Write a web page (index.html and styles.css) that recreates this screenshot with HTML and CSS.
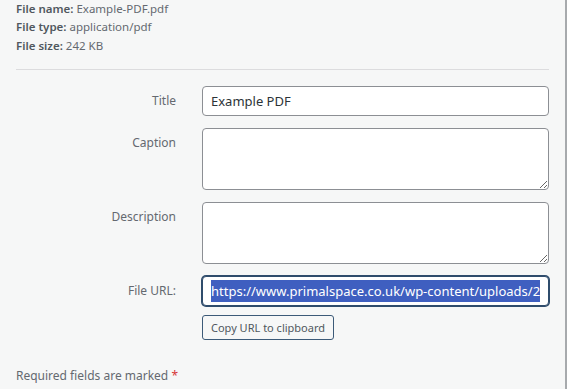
FILE: index.html
```html
<!DOCTYPE html>
<html lang="en">
<head>
    <meta charset="UTF-8">
    <meta name="viewport" content="width=device-width, initial-scale=1.0">
    <title>Attachment Details</title>
    <link rel="stylesheet" href="styles.css">
</head>
<body>
    <div class="panel">
        <div class="file-info">
            <div><strong>File name:</strong> Example-PDF.pdf</div>
            <div><strong>File type:</strong> application/pdf</div>
            <div><strong>File size:</strong> 242 KB</div>
        </div>

        <div class="settings">
            <label class="setting-label" for="title">Title</label>
            <input class="field" type="text" id="title" value="Example PDF">

            <label class="setting-label" for="caption">Caption</label>
            <textarea class="field area" id="caption"></textarea>

            <label class="setting-label" for="description">Description</label>
            <textarea class="field area" id="description"></textarea>

            <label class="setting-label">File URL:</label>
            <div class="url-cell">
                <div class="field url-field"><span class="selected">https://www.primalspace.co.uk/wp-content/uploads/2</span></div>
                <button class="copy-btn" type="button">Copy URL to clipboard</button>
            </div>
        </div>

        <p class="required">Required fields are marked <span class="star">*</span></p>
    </div>
</body>
</html>
```

FILE: styles.css
```css
/* Global Styles */
* {
    margin: 0;
    padding: 0;
    box-sizing: border-box;
}

body {
    font-family: 'Noto Sans', 'Open Sans', sans-serif;
    background-color: #f6f7f7;
    color: #646970;
}

.panel {
    width: 567px;
    height: 389px;
    border-right: 2px solid #a7aaad;
    padding: 0 16px;
    overflow: hidden;
}

/* File info */
.file-info {
    font-size: 11.5px;
    line-height: 18.3px;
    padding-bottom: 14px;
    border-bottom: 1px solid #dcdcde;
}

.file-info strong {
    font-weight: 600;
    color: #50575e;
}

/* Settings grid */
.settings {
    display: grid;
    grid-template-columns: 160px minmax(0, 1fr);
    column-gap: 26px;
    row-gap: 12px;
    margin-top: 16px;
}

.setting-label {
    text-align: right;
    font-size: 12px;
    line-height: 18px;
    padding-top: 6px;
    color: #646970;
}

.field {
    width: 100%;
    min-width: 0;
    height: 30px;
    border: 1px solid #8c8f94;
    border-radius: 4px;
    background-color: #fff;
    padding: 0 8px;
    font-family: inherit;
    font-size: 13px;
    color: #2c3338;
}

.area {
    height: 62px;
    resize: vertical;
}

.url-cell {
    display: flex;
    flex-direction: column;
    align-items: flex-start;
    gap: 9px;
    min-width: 0;
}

.url-field {
    display: flex;
    align-items: center;
    overflow: hidden;
    white-space: nowrap;
    border-color: #2f4c6c;
    box-shadow: 0 0 0 1px #2f4c6c;
    padding-right: 8px;
}

.selected {
    background-color: #3f5fc0;
    color: #fff;
    line-height: 22px;
    font-size: 13px;
}

.copy-btn {
    height: 25px;
    padding: 0 8px;
    border: 1px solid #3c5a78;
    border-radius: 3px;
    background-color: #f6f7f7;
    color: #50575e;
    font-family: inherit;
    font-size: 11px;
    cursor: pointer;
}

/* Footer note */
.required {
    margin-top: 27px;
    font-size: 12px;
    color: #646970;
}

.star {
    color: #d63638;
}
```
